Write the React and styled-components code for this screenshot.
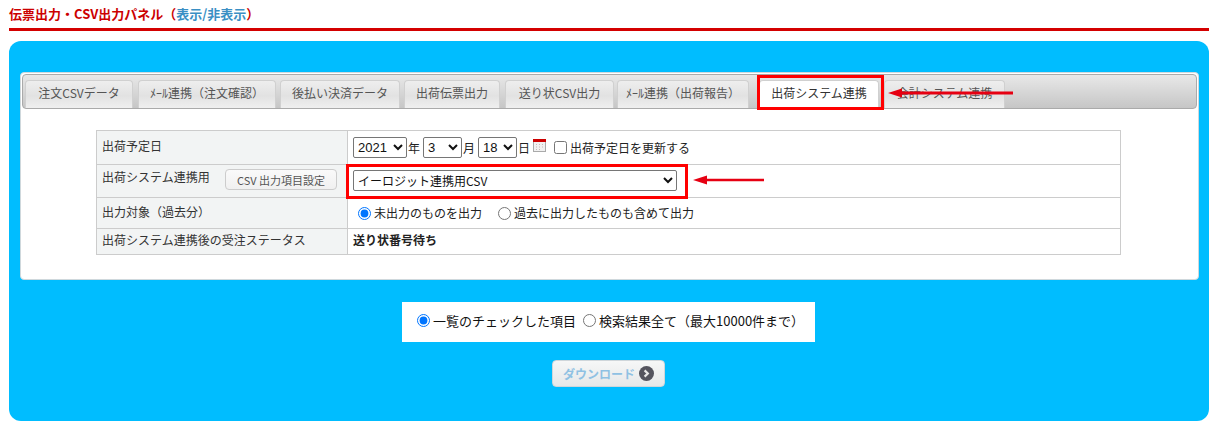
import React from 'react';
import styled, { createGlobalStyle } from 'styled-components';

const GlobalStyle = createGlobalStyle`
    html, body {
        margin: 0;
        padding: 0;
        background: #fff;
    }
    body {
        font-family: "Noto Sans CJK JP", "Liberation Sans", sans-serif;
        font-size: 12px;
        color: #333;
    }
`;

const tabs = [
    { label: '注文CSVデータ', width: 108, gap: 5 },
    { label: 'ﾒｰﾙ連携（注文確認）', width: 138, gap: 4 },
    { label: '後払い決済データ', width: 120, gap: 4 },
    { label: '出荷伝票出力', width: 96, gap: 5 },
    { label: '送り状CSV出力', width: 109, gap: 3 },
    { label: 'ﾒｰﾙ連携（出荷報告）', width: 132, gap: 10 },
    { label: '出荷システム連携', width: 120, gap: 5, active: true },
    { label: '会計システム連携', width: 121, gap: 0 },
];

const App = () => {
    return (
        <Page>
            <GlobalStyle />
            <Title>
                伝票出力・CSV出力パネル（<TitleLink>表示/非表示</TitleLink>）
            </Title>
            <Panel>
                <TabPanel>
                    <TabBar>
                        {tabs.map(tab => (
                            <Tab key={tab.label} $width={tab.width} $gap={tab.gap} $active={tab.active}>{tab.label}</Tab>
                        ))}
                    </TabBar>
                    <SettingTable>
                        <tbody>
                            <Row $height={34}>
                                <LabelCell>出荷予定日</LabelCell>
                                <ValueCell>
                                    <InlineRow>
                                        <SmallSelect $width={54} defaultValue="2021"><option>2021</option></SmallSelect>
                                        <Unit>年</Unit>
                                        <SmallSelect $width={39} defaultValue="3"><option>3</option></SmallSelect>
                                        <Unit>月</Unit>
                                        <SmallSelect $width={39} defaultValue="18"><option>18</option></SmallSelect>
                                        <Unit>日</Unit>
                                        <CalendarIcon />
                                        <Check type="checkbox" />
                                        <span>出荷予定日を更新する</span>
                                    </InlineRow>
                                </ValueCell>
                            </Row>
                            <Row $height={33}>
                                <LabelCell>
                                    <LabelSplit>
                                        <span>出荷システム連携用</span>
                                        <SettingButton>CSV 出力項目設定</SettingButton>
                                    </LabelSplit>
                                </LabelCell>
                                <ValueCell $raise={2}>
                                    <WideSelect defaultValue="e"><option value="e">イーロジット連携用CSV</option></WideSelect>
                                </ValueCell>
                            </Row>
                            <Row $height={31}>
                                <LabelCell>出力対象（過去分）</LabelCell>
                                <ValueCell>
                                    <RadioRow>
                                        <RadioLabel><Radio type="radio" name="target" defaultChecked />未出力のものを出力</RadioLabel>
                                        <RadioLabel><Radio type="radio" name="target" />過去に出力したものも含めて出力</RadioLabel>
                                    </RadioRow>
                                </ValueCell>
                            </Row>
                            <Row $height={26}>
                                <LabelCell>出荷システム連携後の受注ステータス</LabelCell>
                                <ValueCell $raise={3}><strong>送り状番号待ち</strong></ValueCell>
                            </Row>
                        </tbody>
                    </SettingTable>
                </TabPanel>
                <ScopeBox>
                    <ScopeLabel><Radio type="radio" name="scope" defaultChecked />一覧のチェックした項目</ScopeLabel>
                    <ScopeLabel><Radio type="radio" name="scope" />検索結果全て（最大10000件まで）</ScopeLabel>
                </ScopeBox>
                <DownloadButton>
                    ダウンロード
                    <svg width="15" height="15" viewBox="0 0 15 15">
                        <circle cx="7.5" cy="7.5" r="7.5" fill="#54545e" />
                        <path d="M5.6 4.4 8.8 7.5 5.6 10.6" fill="none" stroke="#e8e8e8" strokeWidth="2.2" />
                    </svg>
                </DownloadButton>
            </Panel>

            <RedBox $left={757} $top={75} $width={127} $height={35} />
            <RedBox $left={346} $top={164} $width={342} $height={35} />
            <Arrow $left={888} $top={88} width="125" height="10" viewBox="0 0 125 10">
                <path d="M0 5 14 0.5V3.5H125V6.500H14V9.5Z" fill="#e60012" />
            </Arrow>
            <Arrow $left={693} $top={175} width="71" height="10" viewBox="0 0 71 10">
                <path d="M0 5 14 0.5V3.8H71V6.200H14V9.5Z" fill="#e60012" />
            </Arrow>
        </Page>
    );
};

const CalendarIcon = () => (
    <CalendarSvg width="13" height="13" viewBox="0 0 13 13">
        <rect x="0.5" y="0.5" width="12" height="12" fill="#f1f1f1" stroke="#aaa" />
        <rect x="0" y="0" width="13" height="3" fill="#c00" />
        <path d="M3 5h1v1H3zM6 5h1v1H6zM9 5h1v1H9zM3 7.500h1v1H3zM6 7.500h1v1H6zM9 7.500h1v1H9zM3 10h1v1H3zM6 10h1v1H6z" fill="#c9b7b7" />
    </CalendarSvg>
);

export default App;

const Page = styled.div`
    position: relative;
    width: 1216px;
    height: 433px;
    padding: 0 7px 0 9px;
    box-sizing: border-box;
    overflow: hidden;
`;

const Title = styled.div`
    height: 28px;
    line-height: 28px;
    font-size: 13px;
    font-weight: bold;
    color: #c00;
    border-bottom: 3px solid #d40000;
`;

const TitleLink = styled.span`
    color: #3a8fc4;
`;

const Panel = styled.div`
    display: flex;
    flex-direction: column;
    align-items: center;
    height: 380px;
    margin-top: 10px;
    padding: 31px 10px 0 11px;
    box-sizing: border-box;
    background: #00bdff;
    border-radius: 12px;
`;

const TabPanel = styled.div`
    align-self: stretch;
    height: 208px;
    padding: 1px;
    box-sizing: border-box;
    background: #fff;
    border: 1px solid #cfd8dc;
    border-radius: 4px;
`;

const TabBar = styled.div`
    display: flex;
    align-items: flex-end;
    height: 35px;
    padding: 0 2px;
    box-sizing: border-box;
    background: linear-gradient(#e8e8e8, #c6c6c6);
    border: 1px solid #aaa;
    border-radius: 4px;
`;

const Tab = styled.div`
    flex: 0 0 auto;
    width: ${props => props.$width}px;
    height: 28px;
    margin-right: ${props => props.$gap}px;
    line-height: 23px;
    text-align: center;
    white-space: nowrap;
    box-sizing: border-box;
    color: ${props => (props.$active ? '#333' : '#555')};
    background: ${props => (props.$active ? '#fff' : 'linear-gradient(#eeeeee, #e2e2e2 55%, #efefef)')};
    border: 1px solid #d0d0d0;
    border-bottom: none;
    border-radius: 4px 4px 0 0;
`;

const SettingTable = styled.table`
    width: 1025px;
    margin: 21px 0 0 74px;
    border-collapse: collapse;
    table-layout: fixed;
`;

const Row = styled.tr`
    height: ${props => props.$height}px;
`;

const LabelCell = styled.td`
    width: 240px;
    padding: 0 5px 3px;
    line-height: 16px;
    background: #f2f4f4;
    border: 1px solid #ccc;
`;

const ValueCell = styled.td`
    padding: 0 5px ${props => props.$raise || 0}px;
    line-height: 16px;
    color: #222;
    border: 1px solid #ccc;
`;

const InlineRow = styled.div`
    display: flex;
    align-items: center;
    height: 21px;
`;

const SmallSelect = styled.select`
    width: ${props => props.$width}px;
    height: 21px;
    padding: 0;
    font-family: "Liberation Sans", sans-serif;
    font-size: 13px;
    color: #111;
    background: #fff;
    border: 1px solid #767676;
    border-radius: 2px;
`;

const Unit = styled.span`
    width: 15px;
    margin-left: 1px;
`;

const CalendarSvg = styled.svg`
    flex: 0 0 auto;
    margin-top: -4px;
`;

const Check = styled.input`
    width: 13px;
    height: 13px;
    margin: 0 3px 0 8px;
`;

const LabelSplit = styled.div`
    display: flex;
    align-items: center;
    justify-content: space-between;
    padding-right: 5px;
    span {
        margin-top: -6px;
    }
`;

const SettingButton = styled.button`
    width: 112px;
    height: 21px;
    padding: 0;
    font-family: inherit;
    font-size: 11px;
    color: #555;
    background: linear-gradient(#fafafa, #f0f0f0);
    border: 1px solid #ccc;
    border-radius: 4px;
`;

const WideSelect = styled.select`
    display: block;
    width: 324px;
    height: 21px;
    padding: 0;
    font-family: "Noto Sans CJK JP", sans-serif;
    font-size: 12px;
    color: #111;
    background: #fff;
    border: 1px solid #767676;
    border-radius: 2px;
`;

const RadioRow = styled.div`
    display: flex;
    gap: 16px;
    padding-left: 5px;
`;

const RadioLabel = styled.label`
    display: flex;
    align-items: center;
`;

const Radio = styled.input`
    width: 13px;
    height: 13px;
    margin: 0 3px 0 0;
`;

const ScopeBox = styled.div`
    display: flex;
    align-items: center;
    gap: 7px;
    width: 413px;
    height: 40px;
    margin: 22px 0 0 -2px;
    padding: 0 0 3px 15px;
    box-sizing: border-box;
    background: #fff;
`;

const ScopeLabel = styled.label`
    display: flex;
    align-items: center;
    font-size: 13px;
    color: #111;
    white-space: nowrap;
`;

const DownloadButton = styled.button`
    display: flex;
    align-items: center;
    justify-content: center;
    gap: 4px;
    width: 113px;
    height: 27px;
    margin: 18px 0 0 -2px;
    padding: 0;
    font-family: inherit;
    font-size: 12px;
    font-weight: bold;
    color: #8fc1e3;
    background: linear-gradient(#f6f7f7, #e6e8e9);
    border: 1px solid #cfd6da;
    border-radius: 4px;
`;

const RedBox = styled.div`
    position: absolute;
    left: ${props => props.$left}px;
    top: ${props => props.$top}px;
    width: ${props => props.$width}px;
    height: ${props => props.$height}px;
    box-sizing: border-box;
    border: 3px solid #f00;
`;

const Arrow = styled.svg`
    position: absolute;
    left: ${props => props.$left}px;
    top: ${props => props.$top}px;
`;
